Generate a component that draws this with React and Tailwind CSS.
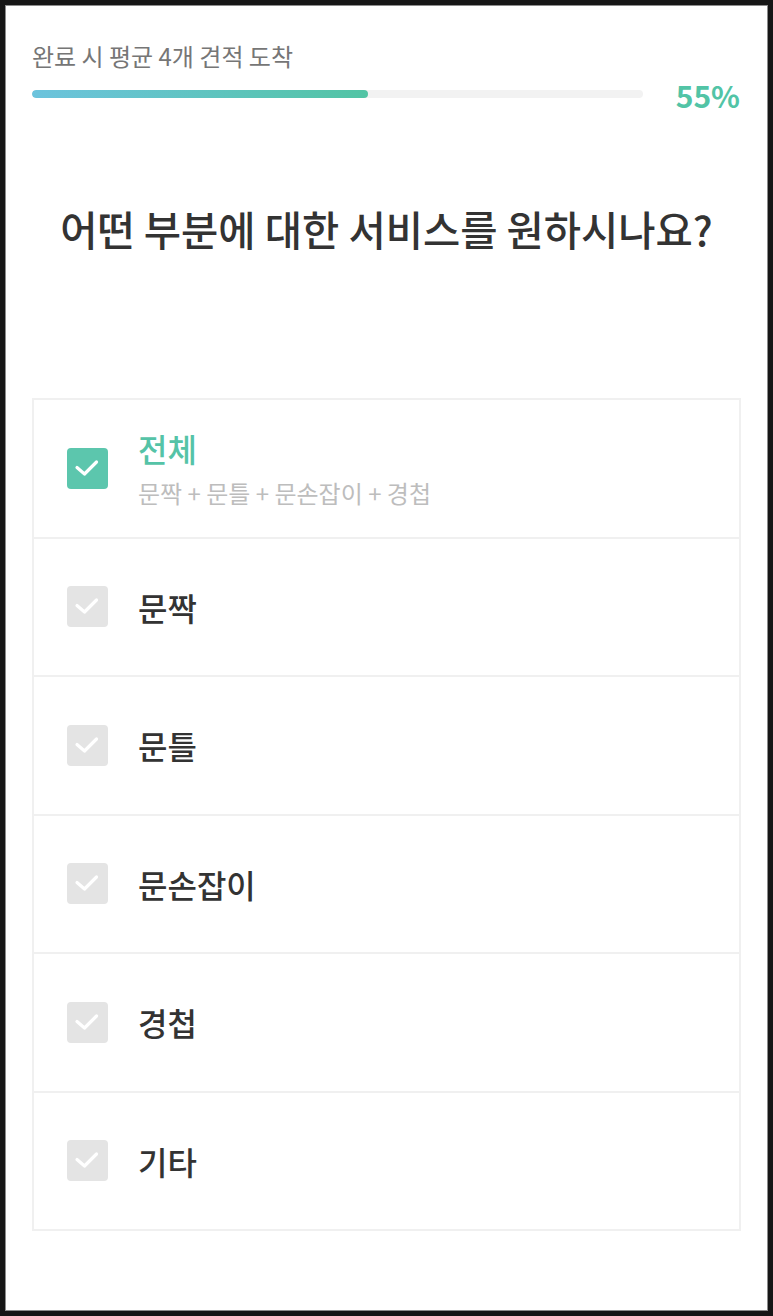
import { useState } from 'react'

const options = [
  { id: 'all', label: '전체', desc: '문짝 + 문틀 + 문손잡이 + 경첩' },
  { id: 'door', label: '문짝' },
  { id: 'frame', label: '문틀' },
  { id: 'handle', label: '문손잡이' },
  { id: 'hinge', label: '경첩' },
  { id: 'etc', label: '기타' },
]

function CheckBox({ checked }) {
  return (
    <div
      className={`w-[41px] h-[41px] rounded-[4px] flex-shrink-0 ${
        checked ? 'bg-[#5cc6ad]' : 'bg-[#e4e4e4]'
      }`}
    >
      <svg width="41" height="41" viewBox="0 0 41 41" fill="none">
        <path d="M10 19.5 L17.5 26 L29.5 14" stroke="white" strokeWidth="3.2" strokeLinecap="round" strokeLinejoin="round" />
      </svg>
    </div>
  )
}

export default function App() {
  const [selected] = useState('all')
  const progress = 55

  return (
    <div
      className="w-[773px] h-[1316px] bg-[#161616] p-[5px]"
      style={{ fontFamily: '"Noto Sans CJK KR", "Noto Sans", sans-serif' }}
    >
      <div className="h-full bg-white border border-[#8c8c8c] px-[26px] pt-[34px]">
        <p className="text-[24px] leading-[32px] text-[#767676]">완료 시 평균 4개 견적 도착</p>

        <div className="flex items-center mt-[4px] h-[36px]">
          <div className="w-[611px] h-[8px] rounded-full bg-[#f2f2f2] overflow-hidden">
            <div
              className="h-full rounded-full bg-gradient-to-r from-[#6cc3dd] to-[#52c4a4]"
              style={{ width: `${progress}%` }}
            />
          </div>
          <span className="ml-auto mr-[1px] mt-[2px] text-[30px] leading-[36px] font-bold text-[#52c4a6]">
            {progress}%
          </span>
        </div>

        <h1 className="mt-[91px] text-center text-[40.5px] leading-[52px] font-medium text-[#333333]">
          어떤 부분에 대한 서비스를 원하시나요?
        </h1>

        <div className="mt-[143px] border-2 border-[#f0f0f0]">
          {options.map((opt, i) => {
            const checked = selected === opt.id
            const last = i === options.length - 1
            return (
              <div
                key={opt.id}
                className={`flex items-center pl-[33px] gap-[30px] ${
                  last ? 'h-[136.5px]' : 'h-[138.5px] border-b-2 border-[#f0f0f0]'
                }`}
              >
                <CheckBox checked={checked} />
                <div className="flex flex-col">
                  <span
                    className={`text-[32px] leading-[40px] font-medium ${
                      checked ? 'text-[#55c3a7]' : 'text-[#333333]'
                    }`}
                  >
                    {opt.label}
                  </span>
                  {opt.desc && (
                    <span className="mt-[10px] text-[24px] leading-[30px] text-[#bdbdbd]">
                      {opt.desc}
                    </span>
                  )}
                </div>
              </div>
            )
          })}
        </div>
      </div>
    </div>
  )
}
